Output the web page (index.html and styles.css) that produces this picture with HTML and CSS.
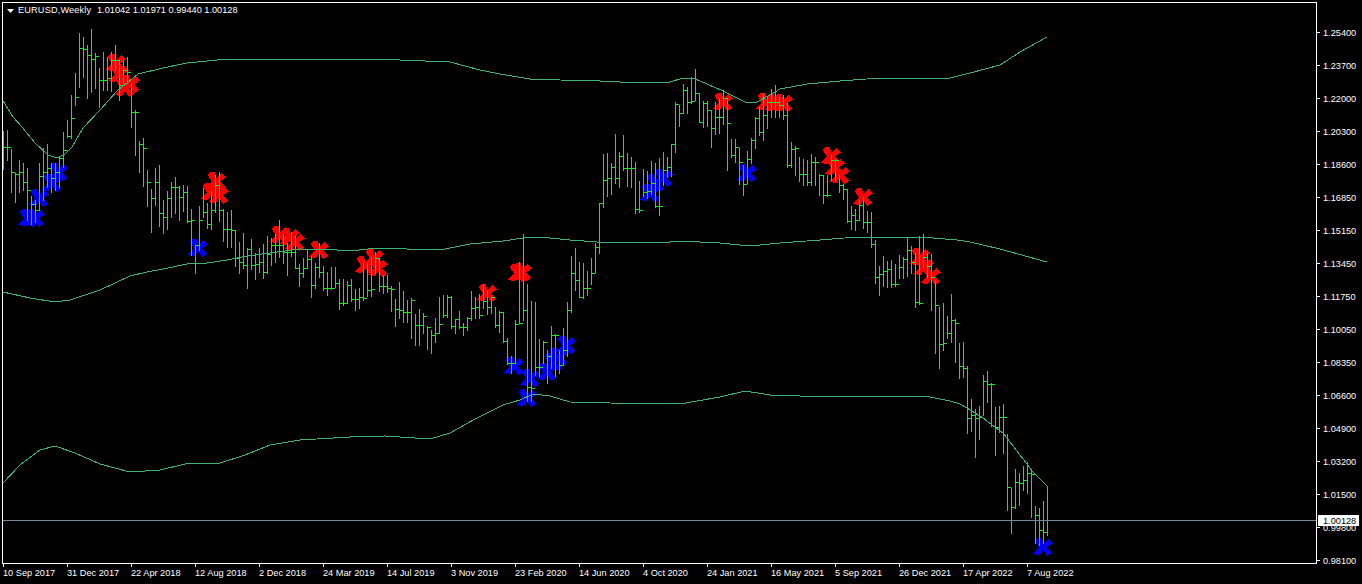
FILE: index.html
```html
<!DOCTYPE html>
<html lang="en">
<head>
    <meta charset="UTF-8">
    <meta name="viewport" content="width=device-width, initial-scale=1.0">
    <title>EURUSD,Weekly</title>
    <link rel="stylesheet" href="styles.css">
</head>
<body>
    <svg id="chart" class="chart" width="1362" height="584" viewBox="0 0 1362 584">
        <defs>
            <path id="cross" d="M-6 -9 L-1.5 -9 L0.5 -3.5 L5 -8 L9.5 -3.5 L3.5 0.5 L9.5 5.5 L4.5 9 L0 3.5 L-4 8.5 L-9.5 6.5 L-4 0.5 L-8.5 -6 Z"/>
        </defs>
        <g id="markers"></g>
        <g id="bars"></g>
        <g id="bands"></g>
        <line class="price-line" x1="3" y1="520.5" x2="1316" y2="520.5"/>
        <rect class="frame" x="2.5" y="2.5" width="1314" height="561"/>
        <g id="axes"></g>
        <rect class="price-tag" x="1318" y="515" width="41" height="11"/>
        <text class="price-tag-text" x="1323" y="524">1.00128</text>
        <polygon class="menu-arrow" points="7,9 14,9 10.5,13"/>
        <text class="label symbol" x="18" y="13">EURUSD,Weekly</text>
        <text class="label" x="97" y="13">1.01042 1.01971 0.99440 1.00128</text>
    </svg>
    <script src="chart.js"></script>
</body>
</html>
```

FILE: styles.css
```css
html, body {
    margin: 0;
    padding: 0;
    background-color: #000000;
    overflow: hidden;
}

.chart {
    display: block;
}

.label {
    font-family: "Liberation Sans", Arial, sans-serif;
    font-size: 9.2px;
    fill: #ffffff;
}

.symbol {
    letter-spacing: 0.15px;
}

.bar {
    fill: none;
    stroke: #22e622;
    stroke-width: 1;
    shape-rendering: crispEdges;
}

.band {
    fill: none;
    stroke: #3cb371;
    stroke-width: 1;
    shape-rendering: crispEdges;
}

.price-line {
    stroke: #778899;
    stroke-width: 1;
    shape-rendering: crispEdges;
}

.frame {
    fill: none;
    stroke: #ffffff;
    stroke-width: 1;
    shape-rendering: crispEdges;
}

.tick {
    stroke: #ffffff;
    stroke-width: 1;
    shape-rendering: crispEdges;
}

.price-tag {
    fill: #ffffff;
    shape-rendering: crispEdges;
}

.price-tag-text {
    font-family: "Liberation Sans", Arial, sans-serif;
    font-size: 9.2px;
    fill: #000000;
}

.menu-arrow {
    fill: #ffffff;
}

.marker-sell {
    fill: #ff0000;
    shape-rendering: crispEdges;
}

.marker-buy {
    fill: #0000ff;
    shape-rendering: crispEdges;
}
```

FILE: chart.js
```js
const NS = 'http://www.w3.org/2000/svg';

// one row per week: high, low, close (already in screen pixels)
const bars = [
    [131,169,147],[130,160,147],[149,192,172],[173,202,174],[160,192,172],[163,190,182],[168,220,190],[196,224,204],
    [200,222,210],[163,210,176],[148,200,172],[144,187,168],[163,192,178],[163,190,172],[157,187,158],[132,167,150],
    [120,137,136],[95,138,118],[73,105,97],[33,87,48],[37,77,49],[45,98,55],[29,92,59],[53,88,56],
    [68,107,80],[52,90,80],[57,90,78],[52,91,60],[45,70,60],[60,100,85],[60,83,70],[57,83,72],
    [83,127,112],[110,155,112],[141,172,144],[138,186,148],[170,206,182],[189,232,198],[168,205,182],[165,226,213],
    [200,233,217],[191,229,198],[182,217,187],[177,213,187],[186,220,197],[185,211,192],[186,222,221],[209,255,220],
    [245,273,245],[206,250,220],[188,217,212],[203,228,224],[191,229,210],[175,212,185],[172,221,210],[209,241,229],
    [212,247,229],[210,247,230],[230,266,258],[242,273,262],[233,268,265],[248,288,249],[239,269,265],[253,279,264],
    [248,272,262],[244,278,272],[236,273,254],[238,265,245],[234,262,245],[220,257,245],[235,263,252],[243,275,252],
    [232,256,252],[236,268,268],[264,286,273],[258,277,268],[250,268,259],[256,297,285],[263,288,267],[243,277,272],
    [266,290,288],[272,295,288],[267,289,288],[267,287,283],[279,309,303],[279,305,303],[281,303,285],[279,301,299],
    [289,310,299],[288,308,297],[263,300,298],[263,296,290],[257,296,289],[252,273,258],[258,291,286],[275,293,286],
    [275,292,288],[286,311,289],[299,326,309],[282,318,310],[291,322,312],[300,322,312],[298,338,300],[314,345,325],
    [309,345,325],[313,333,316],[326,349,327],[330,353,335],[318,342,333],[297,333,324],[295,317,315],[295,317,297],
    [296,328,326],[319,333,319],[311,328,327],[323,335,327],[317,330,318],[291,320,308],[297,318,307],[294,318,315],
    [284,308,301],[290,314,307],[297,313,297],[307,327,325],[311,332,312],[312,342,341],[338,364,363],[356,373,363],
    [320,363,324],[262,323,323],[234,320,310],[284,401,387],[301,401,388],[302,375,367],[339,376,367],[341,363,342],
    [350,383,356],[326,368,335],[334,376,335],[350,373,365],[328,365,350],[302,356,310],[256,312,273],[248,290,280],
    [262,297,297],[263,298,288],[271,295,288],[258,284,273],[243,272,247],[203,253,203],[154,207,180],[153,196,178],
    [163,194,167],[134,183,178],[152,187,156],[135,170,168],[153,186,168],[157,187,168],[162,213,209],[181,212,210],
    [169,196,192],[171,198,191],[161,194,183],[163,207,206],[158,215,206],[152,185,170],[157,177,167],[144,176,144],
    [102,152,104],[105,126,113],[84,113,90],[87,113,102],[77,103,101],[69,100,93],[93,122,122],[101,127,103],
    [101,126,110],[110,147,128],[102,134,117],[98,133,117],[90,124,98],[98,170,123],[139,157,155],[139,162,147],
    [148,184,162],[165,195,184],[151,183,159],[138,163,140],[117,148,118],[107,135,132],[93,140,115],[97,128,102],
    [89,117,102],[85,117,102],[97,117,105],[95,119,115],[103,167,165],[142,167,149],[146,175,148],[157,181,174],
    [159,185,174],[160,185,182],[154,185,162],[157,185,162],[174,195,175],[175,203,195],[175,196,195],[155,180,160],
    [159,180,160],[175,192,185],[184,199,189],[189,222,221],[206,229,215],[209,230,220],[200,220,205],[197,228,222],
    [211,232,222],[212,247,244],[240,283,277],[266,295,274],[256,286,271],[261,287,269],[260,287,284],[264,286,284],
    [255,278,267],[257,278,259],[238,276,250],[246,273,262],[253,307,302],[236,304,303],[234,267,257],[253,277,266],
    [254,310,277],[280,353,305],[307,368,344],[303,350,343],[316,338,333],[294,342,320],[319,362,323],[343,378,366],
    [342,377,368],[366,433,418],[399,431,415],[409,457,418],[406,439,417],[375,415,381],[371,402,384],[383,426,384],
    [407,455,427],[406,432,417],[404,453,417],[434,510,487],[488,533,507],[469,508,482],[473,505,483],[466,490,480],
    [462,493,473],[471,517,474],[506,543,515],[508,545,530],[501,543,532],[486,535,520]
];

const bands = [
    // upper
    [[3,101],[13,117],[22,127],[35,143],[48,155],[57,158],[65,154],[72,147],[83,128],[100,110],[117,91],[138,74],[163,68],[187,63],[217,60],[233,59],[300,59],[400,60],[450,62],[480,70],[500,74],[530,79],[560,80],[600,81],[640,83],[670,82],[683,78],[695,79],[707,84],[723,91],[747,103],[757,102],[770,95],[780,89],[807,84],[840,81],[880,78],[950,78],[970,73],[1000,65],[1020,52],[1047,37]],
    // middle
    [[3,292],[30,298],[55,302],[70,300],[100,290],[130,276],[147,272],[163,269],[187,264],[207,263],[227,260],[247,256],[270,253],[300,249],[337,250],[350,251],[377,248],[407,249],[445,249],[470,244],[503,241],[530,237],[550,238],[570,240],[597,242],[670,242],[680,241],[720,243],[750,246],[780,243],[820,240],[857,237],[913,237],[933,238],[957,240],[970,242],[1000,249],[1047,262]],
    // lower
    [[3,483],[20,465],[40,450],[55,446],[75,453],[100,464],[130,472],[160,470],[185,464],[220,463],[245,455],[270,445],[300,440],[350,437],[385,436],[430,439],[450,433],[475,419],[503,405],[520,400],[533,394],[550,396],[570,402],[610,403],[680,404],[720,397],[745,391],[770,395],[800,396],[880,396],[930,397],[950,401],[960,404],[967,408],[983,418],[1003,433],[1020,455],[1033,472],[1047,486]]
];

const sellMarks = [
    [116,63],[119,74],[125,88],[130,84],[216,181],[211,192],[219,195],[280,235],[290,237],[295,242],
    [319,250],[365,265],[374,258],[378,268],[487,293],[522,272],[518,273],[723,102],[766,102],[775,103],
    [783,103],[831,156],[835,167],[840,175],[863,197],[920,257],[924,267],[931,276]
];

const buyMarks = [
    [28,218],[35,218],[39,198],[52,183],[58,172],[198,248],[514,366],[530,378],[527,398],[547,372],
    [553,362],[558,357],[566,345],[650,193],[655,183],[663,178],[747,173],[1043,547]
];

const priceLabels = ['1.25400','1.23700','1.22000','1.20300','1.18600','1.16850','1.15150','1.13450','1.11750','1.10050','1.08350','1.06600','1.04900','1.03200','1.01500','0.99800','0.98100'];

const dateLabels = ['10 Sep 2017','31 Dec 2017','22 Apr 2018','12 Aug 2018','2 Dec 2018','24 Mar 2019','14 Jul 2019','3 Nov 2019','23 Feb 2020','14 Jun 2020','4 Oct 2020','24 Jan 2021','16 May 2021','5 Sep 2021','26 Dec 2021','17 Apr 2022','7 Aug 2022'];

function add(parentId, tag, attrs, text) {
    const el = document.createElementNS(NS, tag);
    for (const name in attrs) {
        el.setAttribute(name, attrs[name]);
    }
    if (text) {
        el.textContent = text;
    }
    document.getElementById(parentId).appendChild(el);
}

function drawMarks(marks, className) {
    marks.forEach(([x, y]) => {
        add('markers', 'use', { href: '#cross', class: className, x: x, y: y });
    });
}

function drawBars() {
    let stems = '';
    let ticks = '';
    bars.forEach(([high, low, close], i) => {
        const x = 3 + i * 4;
        stems += `M${x + 0.5} ${high}V${low + 1}`;
        ticks += `M${x + 1} ${close + 0.5}h2`;
        if (i > 0) {
            ticks += `M${x - 2} ${bars[i - 1][2] + 0.5}h2`;
        }
    });
    add('bars', 'path', { class: 'bar', d: stems });
    add('bars', 'path', { class: 'bar', d: ticks });
}

function drawBands() {
    bands.forEach((points) => {
        add('bands', 'polyline', { class: 'band', points: points.map((p) => p.join(',')).join(' ') });
    });
}

function drawAxes() {
    priceLabels.forEach((label, i) => {
        const y = 32 + i * 33;
        add('axes', 'line', { class: 'tick', x1: 1317, y1: y + 0.5, x2: 1320, y2: y + 0.5 });
        add('axes', 'text', { class: 'label', x: 1323, y: y + 4 }, label);
    });
    dateLabels.forEach((label, i) => {
        const x = 3 + i * 64;
        add('axes', 'line', { class: 'tick', x1: x + 0.5, y1: 564, x2: x + 0.5, y2: 567 });
        add('axes', 'text', { class: 'label', x: x, y: 576 }, label);
    });
}

drawMarks(sellMarks, 'marker-sell');
drawMarks(buyMarks, 'marker-buy');
drawBars();
drawBands();
drawAxes();
```
